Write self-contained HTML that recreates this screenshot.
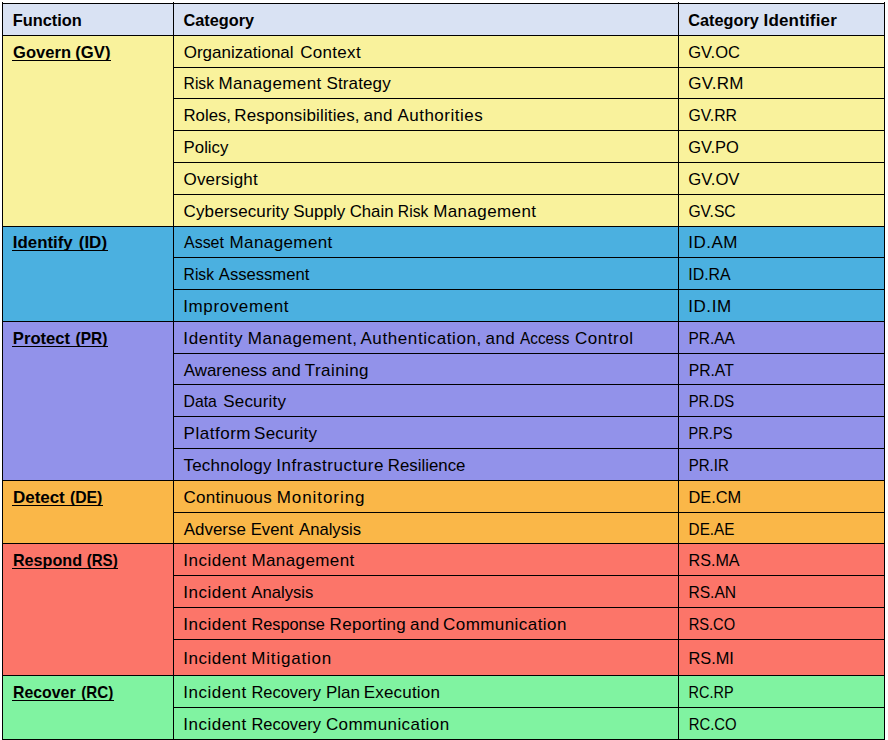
<!DOCTYPE html>
<html><head><meta charset="utf-8"><title>CSF 2.0 Functions and Categories</title>
<style>
html,body{margin:0;padding:0;background:#fff;}
body{width:888px;height:740px;position:relative;overflow:hidden;font-family:"Liberation Sans",sans-serif;font-size:17px;color:#000;}
.bg,.h,.v,.t,.t span,.u{position:absolute;}
.h{height:1px;background:#000;}
.v{width:1px;background:#000;}
.t{left:0;width:888px;height:20px;line-height:20px;white-space:nowrap;}
.t span{left:0;top:0;transform-origin:0 0;}
.b{font-weight:bold;}
.u{height:1px;background:#000;}
</style></head><body>
<div class="bg" style="left:2px;top:3px;width:883px;height:33px;background:#D9E2F3"></div>
<div class="bg" style="left:2px;top:35px;width:883px;height:192px;background:#F9F29C"></div>
<div class="bg" style="left:2px;top:226px;width:883px;height:96px;background:#4BB0E0"></div>
<div class="bg" style="left:2px;top:321px;width:883px;height:160px;background:#9292EA"></div>
<div class="bg" style="left:2px;top:480px;width:883px;height:64px;background:#FAB748"></div>
<div class="bg" style="left:2px;top:543px;width:883px;height:133px;background:#FC7569"></div>
<div class="bg" style="left:2px;top:675px;width:883px;height:65px;background:#80F3A1"></div>
<div class="h" style="left:2px;top:3px;width:883px"></div>
<div class="h" style="left:2px;top:35px;width:883px"></div>
<div class="h" style="left:173px;top:67px;width:712px"></div>
<div class="h" style="left:173px;top:98px;width:712px"></div>
<div class="h" style="left:173px;top:130px;width:712px"></div>
<div class="h" style="left:173px;top:162px;width:712px"></div>
<div class="h" style="left:173px;top:194px;width:712px"></div>
<div class="h" style="left:2px;top:226px;width:883px"></div>
<div class="h" style="left:173px;top:257px;width:712px"></div>
<div class="h" style="left:173px;top:289px;width:712px"></div>
<div class="h" style="left:2px;top:321px;width:883px"></div>
<div class="h" style="left:173px;top:353px;width:712px"></div>
<div class="h" style="left:173px;top:384px;width:712px"></div>
<div class="h" style="left:173px;top:416px;width:712px"></div>
<div class="h" style="left:173px;top:448px;width:712px"></div>
<div class="h" style="left:2px;top:480px;width:883px"></div>
<div class="h" style="left:173px;top:512px;width:712px"></div>
<div class="h" style="left:2px;top:543px;width:883px"></div>
<div class="h" style="left:173px;top:575px;width:712px"></div>
<div class="h" style="left:173px;top:607px;width:712px"></div>
<div class="h" style="left:173px;top:639px;width:712px"></div>
<div class="h" style="left:2px;top:675px;width:883px"></div>
<div class="h" style="left:173px;top:707px;width:712px"></div>
<div class="h" style="left:2px;top:739px;width:883px"></div>
<div class="v" style="left:2px;top:2px;height:738px"></div>
<div class="v" style="left:173px;top:2px;height:738px"></div>
<div class="v" style="left:678px;top:2px;height:738px"></div>
<div class="v" style="left:884px;top:2px;height:738px"></div>
<div class="t b" style="top:11px"><span style="transform:translateX(12.68px) scaleX(0.9640)">Function</span></div>
<div class="t b" style="top:11px"><span style="transform:translateX(183.43px) scaleX(0.9586)">Category</span></div>
<div class="t b" style="top:11px"><span style="transform:translateX(688.26px) scaleX(0.9584)">Category</span> <span style="left:763.59px;letter-spacing:0.156px">Identifier</span></div>
<div class="t b" style="top:43px"><span style="transform:translateX(13.12px) scaleX(0.9726)">Govern</span> <span style="transform:translateX(75.30px) scaleX(0.9796)">(GV)</span></div>
<div class="t b" style="top:233px"><span style="transform:translateX(12.82px) scaleX(0.9910)">Identify</span> <span style="transform:translateX(78.75px) scaleX(0.9989)">(ID)</span></div>
<div class="t b" style="top:329px"><span style="transform:translateX(12.84px) scaleX(0.9776)">Protect</span> <span style="transform:translateX(75.50px) scaleX(0.9122)">(PR)</span></div>
<div class="t b" style="top:488px"><span style="left:12.97px;letter-spacing:-0.032px">Detect</span> <span style="transform:translateX(69.94px) scaleX(0.9277)">(DE)</span></div>
<div class="t b" style="top:551px"><span style="transform:translateX(12.96px) scaleX(0.9500)">Respond</span> <span style="transform:translateX(86.65px) scaleX(0.8876)">(RS)</span></div>
<div class="t b" style="top:683px"><span style="transform:translateX(12.99px) scaleX(0.9324)">Recover</span> <span style="transform:translateX(81.22px) scaleX(0.8932)">(RC)</span></div>
<div class="t" style="top:43px"><span style="left:183.66px;letter-spacing:0.027px">Organizational</span> <span style="left:300.28px;letter-spacing:0.297px">Context</span></div>
<div class="t" style="top:43px"><span style="transform:translateX(688.19px) scaleX(0.9719)">GV.OC</span></div>
<div class="t" style="top:74px"><span style="transform:translateX(183.58px) scaleX(0.9203)">Risk</span> <span style="left:218.38px;letter-spacing:0.408px">Management</span> <span style="left:326.53px;letter-spacing:0.117px">Strategy</span></div>
<div class="t" style="top:74px"><span style="left:688.26px;letter-spacing:0.219px">GV.RM</span></div>
<div class="t" style="top:106px"><span style="transform:translateX(183.47px) scaleX(0.9867)">Roles,</span> <span style="left:234.34px;letter-spacing:0.152px">Responsibilities,</span> <span style="left:363.38px;letter-spacing:0.420px">and</span> <span style="left:397.38px;letter-spacing:0.498px">Authorities</span></div>
<div class="t" style="top:106px"><span style="transform:translateX(688.38px) scaleX(0.9294)">GV.RR</span></div>
<div class="t" style="top:138px"><span style="transform:translateX(183.60px) scaleX(0.9874)">Policy</span></div>
<div class="t" style="top:138px"><span style="transform:translateX(688.19px) scaleX(0.9695)">GV.PO</span></div>
<div class="t" style="top:170px"><span style="left:183.50px;letter-spacing:0.177px">Oversight</span></div>
<div class="t" style="top:170px"><span style="transform:translateX(688.15px) scaleX(0.9820)">GV.OV</span></div>
<div class="t" style="top:202px"><span style="left:183.55px;letter-spacing:0.123px">Cybersecurity</span> <span style="left:293.14px;letter-spacing:0.030px">Supply</span> <span style="transform:translateX(349.64px) scaleX(0.9884)">Chain</span> <span style="transform:translateX(397.86px) scaleX(0.9211)">Risk</span> <span style="left:433.14px;letter-spacing:0.412px">Management</span></div>
<div class="t" style="top:202px"><span style="transform:translateX(688.38px) scaleX(0.9214)">GV.SC</span></div>
<div class="t" style="top:233px"><span style="transform:translateX(183.97px) scaleX(0.9404)">Asset</span> <span style="left:229.49px;letter-spacing:0.404px">Management</span></div>
<div class="t" style="top:233px"><span style="left:688.15px;letter-spacing:0.530px">ID.AM</span></div>
<div class="t" style="top:265px"><span style="transform:translateX(183.58px) scaleX(0.9203)">Risk</span> <span style="transform:translateX(218.81px) scaleX(0.9772)">Assessment</span></div>
<div class="t" style="top:265px"><span style="transform:translateX(688.26px) scaleX(0.9358)">ID.RA</span></div>
<div class="t" style="top:297px"><span style="left:183.27px;letter-spacing:0.608px">Improvement</span></div>
<div class="t" style="top:297px"><span style="left:688.15px;letter-spacing:0.605px">ID.IM</span></div>
<div class="t" style="top:329px"><span style="left:183.27px;letter-spacing:0.644px">Identity</span> <span style="left:247.83px;letter-spacing:0.510px">Management,</span> <span style="left:360.43px;letter-spacing:0.602px">Authentication,</span> <span style="left:485.54px;letter-spacing:0.428px">and</span> <span style="transform:translateX(520.07px) scaleX(0.8994)">Access</span> <span style="left:575.03px;letter-spacing:0.537px">Control</span></div>
<div class="t" style="top:329px"><span style="transform:translateX(688.43px) scaleX(0.9110)">PR.AA</span></div>
<div class="t" style="top:361px"><span style="transform:translateX(183.81px) scaleX(0.9932)">Awareness</span> <span style="left:271.68px;letter-spacing:0.303px">and</span> <span style="left:304.87px;letter-spacing:0.414px">Training</span></div>
<div class="t" style="top:361px"><span style="transform:translateX(688.64px) scaleX(0.9255)">PR.AT</span></div>
<div class="t" style="top:392px"><span style="transform:translateX(183.49px) scaleX(0.9275)">Data</span> <span style="left:223.29px;letter-spacing:0.181px">Security</span></div>
<div class="t" style="top:392px"><span style="transform:translateX(688.67px) scaleX(0.8754)">PR.DS</span></div>
<div class="t" style="top:424px"><span style="left:183.57px;letter-spacing:0.525px">Platform</span> <span style="left:254.11px;letter-spacing:0.205px">Security</span></div>
<div class="t" style="top:424px"><span style="transform:translateX(688.60px) scaleX(0.8582)">PR.PS</span></div>
<div class="t" style="top:456px"><span style="left:183.47px;letter-spacing:0.215px">Technology</span> <span style="left:276.21px;letter-spacing:0.550px">Infrastructure</span> <span style="transform:translateX(387.86px) scaleX(0.9886)">Resilience</span></div>
<div class="t" style="top:456px"><span style="transform:translateX(688.64px) scaleX(0.8854)">PR.IR</span></div>
<div class="t" style="top:488px"><span style="left:183.55px;letter-spacing:0.252px">Continuous</span> <span style="left:276.69px;letter-spacing:0.942px">Monitoring</span></div>
<div class="t" style="top:488px"><span style="transform:translateX(688.43px) scaleX(0.9644)">DE.CM</span></div>
<div class="t" style="top:520px"><span style="transform:translateX(183.81px) scaleX(0.9949)">Adverse</span> <span style="transform:translateX(250.74px) scaleX(0.9797)">Event</span> <span style="transform:translateX(299.03px) scaleX(0.9786)">Analysis</span></div>
<div class="t" style="top:520px"><span style="transform:translateX(688.61px) scaleX(0.8998)">DE.AE</span></div>
<div class="t" style="top:551px"><span style="left:183.27px;letter-spacing:0.494px">Incident</span> <span style="left:251.42px;letter-spacing:0.409px">Management</span></div>
<div class="t" style="top:551px"><span style="transform:translateX(688.48px) scaleX(0.9497)">RS.MA</span></div>
<div class="t" style="top:583px"><span style="left:183.27px;letter-spacing:0.494px">Incident</span> <span style="transform:translateX(251.34px) scaleX(0.9805)">Analysis</span></div>
<div class="t" style="top:583px"><span style="transform:translateX(688.41px) scaleX(0.9181)">RS.AN</span></div>
<div class="t" style="top:615px"><span style="left:183.27px;letter-spacing:0.494px">Incident</span> <span style="transform:translateX(251.39px) scaleX(0.9605)">Response</span> <span style="left:329.57px;letter-spacing:0.307px">Reporting</span> <span style="left:410.03px;letter-spacing:0.427px">and</span> <span style="left:443.03px;letter-spacing:0.441px">Communication</span></div>
<div class="t" style="top:615px"><span style="transform:translateX(688.64px) scaleX(0.8637)">RS.CO</span></div>
<div class="t" style="top:649px"><span style="left:183.27px;letter-spacing:0.494px">Incident</span> <span style="left:251.34px;letter-spacing:0.798px">Mitigation</span></div>
<div class="t" style="top:649px"><span style="transform:translateX(688.46px) scaleX(0.9621)">RS.MI</span></div>
<div class="t" style="top:683px"><span style="left:183.27px;letter-spacing:0.494px">Incident</span> <span style="transform:translateX(251.44px) scaleX(0.9681)">Recovery</span> <span style="transform:translateX(325.91px) scaleX(0.9985)">Plan</span> <span style="left:363.65px;letter-spacing:0.209px">Execution</span></div>
<div class="t" style="top:683px"><span style="transform:translateX(688.62px) scaleX(0.8497)">RC.RP</span></div>
<div class="t" style="top:715px"><span style="left:183.27px;letter-spacing:0.494px">Incident</span> <span style="transform:translateX(251.44px) scaleX(0.9681)">Recovery</span> <span style="left:325.91px;letter-spacing:0.423px">Communication</span></div>
<div class="t" style="top:715px"><span style="transform:translateX(688.66px) scaleX(0.8763)">RC.CO</span></div>
<div class="u" style="left:12px;top:60px;width:98.8px"></div>
<div class="u" style="left:12px;top:250px;width:96.0px"></div>
<div class="u" style="left:12px;top:346px;width:96.0px"></div>
<div class="u" style="left:12px;top:505px;width:90.7px"></div>
<div class="u" style="left:12px;top:568px;width:105.8px"></div>
<div class="u" style="left:12px;top:700px;width:101.8px"></div>
</body></html>
